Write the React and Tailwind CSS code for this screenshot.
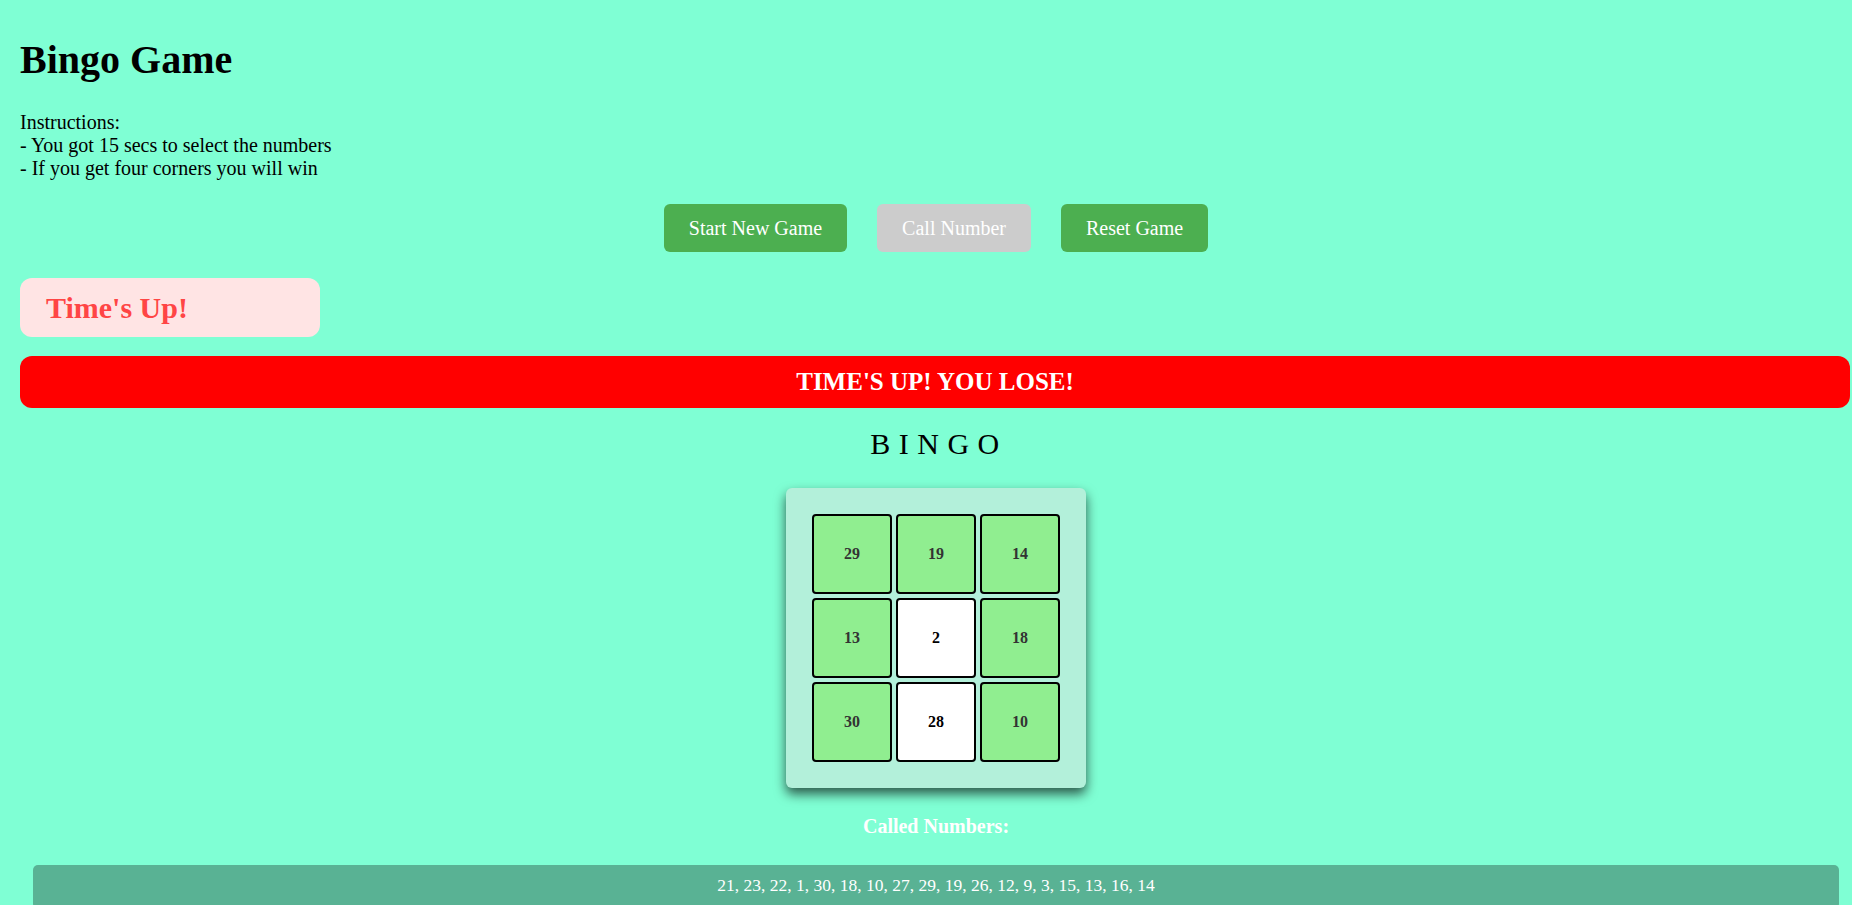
const CELLS = [
  { n: 29, marked: true },
  { n: 19, marked: true },
  { n: 14, marked: true },
  { n: 13, marked: true },
  { n: 2, marked: false },
  { n: 18, marked: true },
  { n: 30, marked: true },
  { n: 28, marked: false },
  { n: 10, marked: true },
]

const CALLED = [21, 23, 22, 1, 30, 18, 10, 27, 29, 19, 26, 12, 9, 3, 15, 13, 16, 14]

function Cell({ n, marked }) {
  return (
    <div
      className={`w-[80px] h-[80px] flex items-center justify-center border-2 border-black rounded-[4px] text-[16px] font-bold ${
        marked ? 'bg-[#90ee90] text-[#333333]' : 'bg-white text-black'
      }`}
    >
      {n}
    </div>
  )
}

export default function App() {
  return (
    <div className="min-h-screen bg-[#7fffd4] pl-[20px] pb-[20px] text-black font-['Liberation_Serif','Times_New_Roman',serif]">
      <h1 className="pt-[37px] text-[40px] leading-[46px] font-bold">Bingo Game</h1>

      <div className="mt-[28px] text-[20px] leading-[23px]">
        <div>Instructions:</div>
        <div>- You got 15 secs to select the numbers</div>
        <div>- If you get four corners you will win</div>
      </div>

      <div className="mt-[24px] flex justify-center gap-[30px]">
        <button className="h-[48px] px-[25px] rounded-[6px] bg-[#4caf50] text-white text-[20px]">
          Start New Game
        </button>
        <button className="h-[48px] px-[25px] rounded-[6px] bg-[#cccccc] text-white text-[20px]" disabled>
          Call Number
        </button>
        <button className="h-[48px] px-[25px] rounded-[6px] bg-[#4caf50] text-white text-[20px]">
          Reset Game
        </button>
      </div>

      <div className="mt-[26px] w-[300px] h-[59px] rounded-[12px] bg-[#ffe4e4] pl-[26px] flex items-center">
        <span className="text-[30px] font-bold text-[#ff4545]">Time's Up!</span>
      </div>

      <div className="mt-[19px] mr-[2px] h-[52px] rounded-[12px] bg-[#ff0000] flex items-center justify-center">
        <span className="text-[25px] font-bold text-white">TIME'S UP! YOU LOSE!</span>
      </div>

      <div className="mt-[18px] pl-[6px] text-center text-[30px] leading-[35px] tracking-[8.5px]">BINGO</div>

      <div className="mt-[27px] flex justify-center">
        <div className="w-[300px] h-[300px] rounded-[6px] bg-[#b3f0da] shadow-[0_6px_12px_rgba(0,0,0,0.65)] flex items-center justify-center">
          <div className="grid grid-cols-3 gap-[4px]">
            {CELLS.map((c) => (
              <Cell key={c.n} n={c.n} marked={c.marked} />
            ))}
          </div>
        </div>
      </div>

      <div className="mt-[27px] text-center text-[20px] leading-[23px] font-bold text-white">
        Called Numbers:
      </div>

      <div className="mt-[27px] ml-[13px] mr-[13px] rounded-[5px] bg-[#59b294] pt-[9px] pb-[12px] text-center text-[17.5px] leading-[23px] text-white">
        {CALLED.join(', ')}
      </div>
    </div>
  )
}
